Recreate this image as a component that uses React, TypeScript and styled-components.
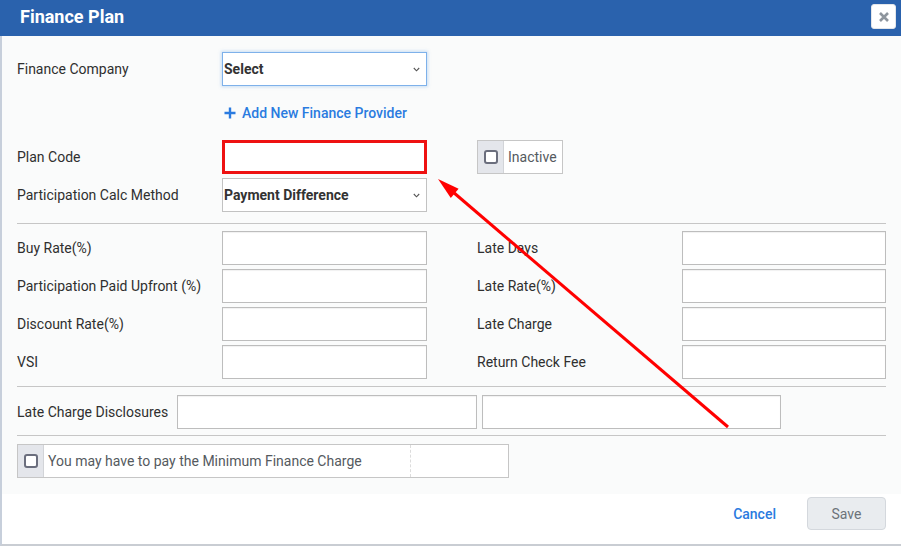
import React from 'react';
import styled, { createGlobalStyle } from 'styled-components';

const Global = createGlobalStyle`
  html, body { margin: 0; padding: 0; }
  body { font-family: Roboto, "Liberation Sans", Arial, sans-serif; background: #fff; }
  * { box-sizing: border-box; }
`;

const Modal = styled.div`
  position: relative;
  width: 901px;
  height: 546px;
  display: flex;
  flex-direction: column;
  overflow: hidden;
`;

const Header = styled.div`
  height: 36px;
  flex: 0 0 36px;
  background: #2a62ad;
  display: flex;
  justify-content: space-between;
  align-items: flex-start;
  padding: 0 5px 0 20px;
`;

const Title = styled.h1`
  margin: 0;
  line-height: 34px;
  font-size: 18px;
  font-weight: 700;
  color: #fff;
`;

const CloseButton = styled.button`
  margin-top: 4px;
  width: 25px;
  height: 25px;
  padding: 0;
  border: 1px solid #e3e6ea;
  border-radius: 3px;
  background: #fff;
  display: flex;
  align-items: center;
  justify-content: center;
`;

const Content = styled.div`
  flex: 1;
  display: flex;
  flex-direction: column;
  border-left: 2px solid #c7cfdb;
  border-bottom: 2px solid #c9cdd3;
`;

const Body = styled.div`
  flex: 1;
  background: #fafbfb;
  padding: 16px 15px 0 15px;
  display: flex;
  flex-direction: column;
`;

const FieldRow = styled.div<{ $mt?: number }>`
  display: flex;
  align-items: center;
  height: 34px;
  margin-top: ${(p) => p.$mt ?? 0}px;
`;

const Label = styled.label<{ $w?: number }>`
  flex: 0 0 ${(p) => p.$w ?? 205}px;
  font-size: 14px;
  color: #2f2f2f;
`;

const TextInput = styled.div<{ $w?: number; $error?: boolean }>`
  width: ${(p) => (p.$w ? `${p.$w}px` : 'auto')};
  flex: ${(p) => (p.$w ? 'none' : '1')};
  height: 34px;
  background: #fff;
  border: ${(p) => (p.$error ? '3px solid #ee1111' : '1px solid #bdbdbd')};
  box-shadow: ${(p) => (p.$error ? 'none' : 'inset 0 1px 1px rgba(0,0,0,0.06)')};
`;

const Select = styled.div<{ $focus?: boolean }>`
  width: 205px;
  height: 34px;
  background: #fff;
  border: 1px solid ${(p) => (p.$focus ? '#7eb1ea' : '#c2c2c2')};
  box-shadow: ${(p) => (p.$focus ? '0 0 3px 1px rgba(110,165,230,0.35)' : 'none')};
  display: flex;
  align-items: center;
  justify-content: space-between;
  padding: 0 6px 0 1px;
  font-size: 14px;
  font-weight: 700;
  color: #333;
`;

const LinkRow = styled.div`
  height: 26px;
  margin: 14px 0 14px 207px;
  display: flex;
  align-items: center;
  gap: 6px;
  color: #2a7be0;
  font-size: 14px;
  font-weight: 500;
`;

const CheckGroup = styled.div<{ $w: number; $ml?: number }>`
  width: ${(p) => p.$w}px;
  height: 34px;
  margin-left: ${(p) => p.$ml ?? 0}px;
  display: flex;
  border: 1px solid #c6c6c6;
  background: #fff;
`;

const CheckAddon = styled.div`
  flex: 0 0 26px;
  background: #e4e6eb;
  border-right: 1px solid #d2d4d8;
  display: flex;
  align-items: center;
  justify-content: center;
`;

const CheckText = styled.div<{ $dashed?: boolean; $w?: number }>`
  flex: ${(p) => (p.$w ? `0 0 ${p.$w}px` : '1')};
  display: flex;
  align-items: center;
  padding-left: 4px;
  font-size: 14px;
  color: #555a60;
  border-right: ${(p) => (p.$dashed ? '1px dashed #dcdcdc' : 'none')};
`;

const Divider = styled.hr<{ $mt: number; $mb: number }>`
  border: 0;
  border-top: 1px solid #c6c6c6;
  margin: ${(p) => p.$mt}px 0 ${(p) => p.$mb}px 0;
  width: 869px;
`;

const PairGrid = styled.div`
  display: grid;
  grid-template-columns: 410px 409px;
  column-gap: 50px;
  row-gap: 4px;
`;

const Footer = styled.div`
  flex: 0 0 50px;
  background: #fff;
  display: flex;
  justify-content: flex-end;
  align-items: flex-start;
  padding: 3px 15px 0 0;
  gap: 31px;
`;

const CancelLink = styled.button`
  height: 33px;
  border: 0;
  background: none;
  padding: 0;
  font-family: inherit;
  font-size: 14px;
  font-weight: 500;
  color: #2a7be0;
`;

const SaveButton = styled.button`
  width: 79px;
  height: 33px;
  border: 1px solid #d4d8dd;
  border-radius: 4px;
  background: #e9ecef;
  font-family: inherit;
  font-size: 14px;
  color: #6c737a;
`;

const ArrowLayer = styled.svg`
  position: absolute;
  left: 0;
  top: 0;
  pointer-events: none;
`;

const Chevron = () => (
  <svg width="7" height="5" viewBox="0 0 7 5">
    <path d="M0.8 1 L3.5 3.8 L6.2 1" fill="none" stroke="#555" strokeWidth="1.1" />
  </svg>
);

const CheckIcon = () => (
  <svg width="14" height="14" viewBox="0 0 14 14">
    <rect x="1" y="1" width="12" height="12" rx="2" fill="#fff" stroke="#6b6e7d" strokeWidth="2" />
  </svg>
);

const Plus = () => (
  <svg width="12" height="12" viewBox="0 0 12 12">
    <path d="M6 0.5 V11.5 M0.5 6 H11.5" stroke="#2a7be0" strokeWidth="2.4" />
  </svg>
);

const pairs: [string, string][] = [
  ['Buy Rate(%)', 'Late Days'],
  ['Participation Paid Upfront (%)', 'Late Rate(%)'],
  ['Discount Rate(%)', 'Late Charge'],
  ['VSI', 'Return Check Fee'],
];

export default function App() {
  return (
    <Modal>
      <Global />
      <Header>
        <Title>Finance Plan</Title>
        <CloseButton aria-label="Close">
          <svg width="10" height="10" viewBox="0 0 10 10">
            <path d="M1 1 L9 9 M9 1 L1 9" stroke="#8e959d" strokeWidth="2.6" />
          </svg>
        </CloseButton>
      </Header>
      <Content>
        <Body>
          <FieldRow>
            <Label>Finance Company</Label>
            <Select $focus>
              <span>Select</span>
              <Chevron />
            </Select>
          </FieldRow>
          <LinkRow>
            <Plus />
            <span>Add New Finance Provider</span>
          </LinkRow>
          <FieldRow>
            <Label>Plan Code</Label>
            <TextInput $w={205} $error />
            <CheckGroup $w={86} $ml={50}>
              <CheckAddon>
                <CheckIcon />
              </CheckAddon>
              <CheckText>Inactive</CheckText>
            </CheckGroup>
          </FieldRow>
          <FieldRow $mt={4}>
            <Label>Participation Calc Method</Label>
            <Select>
              <span>Payment Difference</span>
              <Chevron />
            </Select>
          </FieldRow>
          <Divider $mt={11} $mb={7} />
          <PairGrid>
            {pairs.map(([l, r]) => (
              <React.Fragment key={l}>
                <FieldRow>
                  <Label>{l}</Label>
                  <TextInput $w={205} />
                </FieldRow>
                <FieldRow>
                  <Label>{r}</Label>
                  <TextInput $w={204} />
                </FieldRow>
              </React.Fragment>
            ))}
          </PairGrid>
          <Divider $mt={7} $mb={8} />
          <FieldRow>
            <Label $w={160}>Late Charge Disclosures</Label>
            <TextInput $w={300} />
            <TextInput $w={299} style={{ marginLeft: 5 }} />
          </FieldRow>
          <Divider $mt={6} $mb={8} />
          <FieldRow>
            <CheckGroup $w={492}>
              <CheckAddon>
                <CheckIcon />
              </CheckAddon>
              <CheckText $dashed $w={367}>You may have to pay the Minimum Finance Charge</CheckText>
              <CheckText />
            </CheckGroup>
          </FieldRow>
        </Body>
        <Footer>
          <CancelLink>Cancel</CancelLink>
          <SaveButton>Save</SaveButton>
        </Footer>
      </Content>
      <ArrowLayer width="901" height="546" viewBox="0 0 901 546">
        <line x1="728" y1="427" x2="453" y2="192" stroke="#ff0000" strokeWidth="3" />
        <polygon points="438,179 450.8,197.9 458.6,188.7" fill="#ff0000" />
      </ArrowLayer>
    </Modal>
  );
}
